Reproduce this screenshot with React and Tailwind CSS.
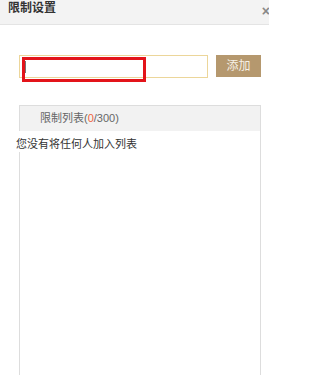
import React from 'react';

const App = () => {
  return (
    <div
      className="w-[269px] h-[375px] overflow-hidden bg-white"
      style={{ fontFamily: '"Liberation Sans", "Noto Sans CJK SC", sans-serif' }}
    >
      <div className="h-[25px] bg-[#f3f3f3] border-b border-[#e4e4e4] flex items-start justify-between pl-[8px] pt-[3px]">
        <span className="text-[12px] font-bold text-[#333] leading-[11px]">限制设置</span>
        <span className="text-[14px] text-[#888] leading-none mt-[1px] mr-[-1px] font-bold">×</span>
      </div>

      <div className="pl-[19px] pr-[8px] pt-[30px]">
        <div className="flex items-start">
          <div className="relative w-[189px] h-[23px] border border-[#ecd69a] bg-white">
            <div className="absolute left-[5px] top-[5px] w-px h-[12px] bg-[#777]" />
            <div className="absolute left-[2px] top-[1px] w-[124px] h-[25px] border-[3px] border-[#e3141a]" />
          </div>
          <button className="ml-[8px] w-[45px] h-[22px] bg-[#b5986e] text-[#f7f1e6] text-[12px] leading-none">
            添加
          </button>
        </div>

        <div className="mt-[27px] h-[300px] border border-b-0 border-[#dddddd]">
          <div className="h-[25px] bg-[#f2f2f2] flex items-center pl-[20px] text-[11px] text-[#666]">
            限制列表(<span className="text-[#f0643c]">0</span>/300)
          </div>
          <div className="pt-[5px] -ml-[4px] text-[11px] leading-[16px] text-[#333] bg-white relative">
            您没有将任何人加入列表
          </div>
        </div>
      </div>
    </div>
  );
};

export default App;
